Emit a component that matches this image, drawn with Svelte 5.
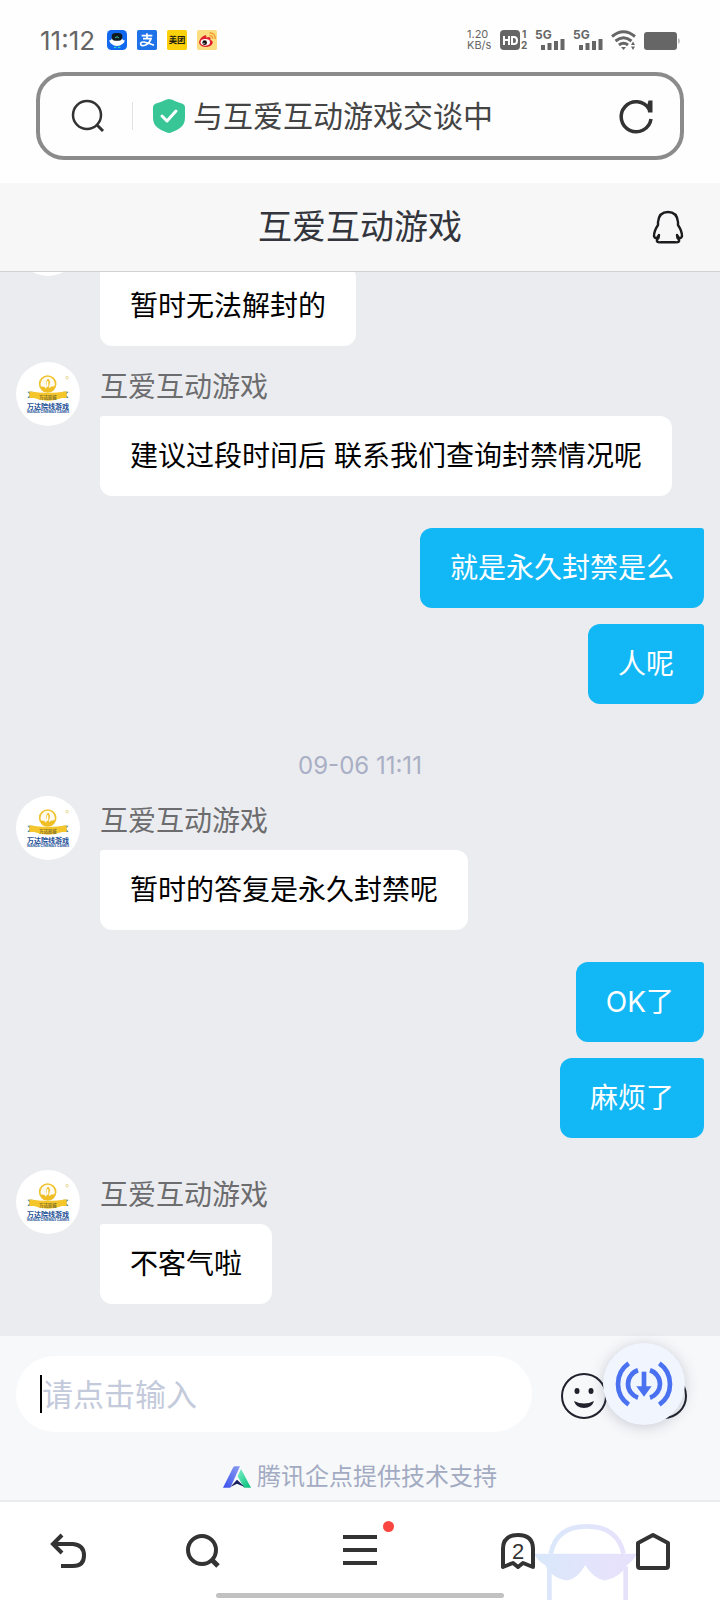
<script lang="ts">
	import { onMount } from "svelte";

	const contact = "互爱互动游戏";

	const messages = [
		{ from: "them", text: "暂时无法解封的" },
		{ from: "them", text: "建议过段时间后 联系我们查询封禁情况呢" },
		{ from: "me", text: "就是永久封禁是么", turn: true },
		{ from: "me", text: "人呢" },
		{ from: "time", text: "09-06 11:11" },
		{ from: "them", text: "暂时的答复是永久封禁呢" },
		{ from: "me", text: "OK了", turn: true },
		{ from: "me", text: "麻烦了" },
		{ from: "them", text: "不客气啦", turn: true },
	];

	let address = "与互爱互动游戏交谈中";
	let draft = "";
	let chat: HTMLElement;

	// open on the newest message
	onMount(() => {
		chat.scrollTop = chat.scrollHeight;
	});
</script>

<div class="page">
	<div class="status">
		<span class="clock">11:12</span>
		<div class="apps">
			<svg viewBox="0 0 60 60">
				<rect width="60" height="60" rx="13" fill="#1268ee" />
				<path d="M6 31q5 1 8 -3q3 -19 16 -19t16 19q3 4 8 3q-3 9 -8 11q-6 6 -16 6t-16 -6q-5 -2 -8 -11z" fill="#fff" />
				<rect x="14" y="9" width="32" height="23" rx="11" fill="#101820" />
				<path d="M24 24q6 -8 12 0" stroke="#35d0a0" stroke-width="3" fill="none" />
				<path d="M21 50h7v4h-7zM33 50h7v4h-7z" fill="#2fd9c4" />
			</svg>
			<svg viewBox="0 0 60 60">
				<rect width="60" height="60" rx="5" fill="#1f72e8" />
				<path d="M30 10v15M14 17h32M18 26h24q-4 13 -16 19q-12 5 -15 -2q-1 -8 10 -7q13 3 30 10" stroke="#fff" stroke-width="5" fill="none" />
			</svg>
			<svg viewBox="0 0 60 60">
				<rect width="60" height="60" rx="5" fill="#fbd10b" />
				<text x="30" y="39" font-size="25" font-weight="700" text-anchor="middle" fill="#1d1a10">美团</text>
			</svg>
			<svg viewBox="0 0 60 60">
				<rect width="60" height="60" rx="5" fill="#fbdd82" />
				<path d="M6 36q3 -13 18 -20q6 -1 4 7q13 -5 13 3l-1 4q9 3 7 9q-4 12 -22 12q-18 -1 -19 -15z" fill="#e0202c" />
				<ellipse cx="25" cy="37" rx="14" ry="10" fill="#fff" />
				<circle cx="23" cy="38" r="7" fill="#15100f" />
				<circle cx="21" cy="40" r="2" fill="#fff" />
				<path d="M38 17q9 -1 9 9M38 9q17 -1 17 18" stroke="#f0962a" stroke-width="4" fill="none" />
			</svg>
		</div>
		<div class="signals">
			<div class="speed"><span>1.20</span><span>KB/s</span></div>
			<svg class="hd" viewBox="0 0 28 20">
				<rect width="20" height="20" rx="4" fill="#666" />
				<path d="M4 6v9M9 6v9M4 10h5M12 7h2q3 0 3 3.500t-3 3.500h-2z" stroke="#fff" stroke-width="2" fill="none" />
				<text x="22" y="8" font-size="10" font-weight="700" fill="#666">1</text>
				<text x="21" y="19" font-size="10" font-weight="700" fill="#666">2</text>
			</svg>
			{#each [1, 2] as sim (sim)}
				<svg class="sim" viewBox="0 0 31 20">
					<text x="0" y="9" font-size="12" font-weight="700" fill="#666">5G</text>
					<path d="M8 15v5M14.500 13v7M21 11v9M27.500 9v11" stroke="#666" stroke-width="4" />
				</svg>
			{/each}
			<svg class="wifi" viewBox="0 0 26 20">
				<path d="M1 6.500q11.500 -9.500 23 0M4.500 11q8 -6.500 16 0M8 15q4.500 -3.500 9 0" stroke="#666" stroke-width="3" fill="none" />
				<path d="M10 17h5l-2.500 3zM20 15l2 -3.500l2 3.500zM20 16.500h4l-2 3.500z" fill="#666" />
			</svg>
			<svg class="battery" viewBox="0 0 36 20">
				<rect y="2" width="33" height="18" rx="3" fill="#666" />
				<path d="M34 8q2 1 2 3t-2 3z" fill="#bbb" />
			</svg>
		</div>
	</div>

	<div class="address">
		<svg class="find" viewBox="0 0 34 34" fill="none" stroke="#333" stroke-width="2.500">
			<circle cx="16" cy="16" r="14" />
			<path d="M26 26l6 6" stroke-width="3" />
		</svg>
		<span class="divider"></span>
		<svg class="shield" viewBox="0 0 32 34">
			<path d="M16 0q3 0 7 2.500q4 1.500 6 2q3 1 3 4v10q0 7 -5 10.500q-3 2 -6.500 3.500t-4.500 1.500t-4.500 -1.500t-6.500 -3.500q-5 -3.500 -5 -10.500v-10q0 -3 3 -4q2 -.5 6 -2q4 -2.500 7 -2.500z" fill="#38c696" />
			<path d="M9 17l5 5l9 -10" stroke="#fff" stroke-width="3" fill="none" stroke-linecap="round" stroke-linejoin="round" />
		</svg>
		<input aria-label="地址栏" bind:value={address} />
		<button class="reload" aria-label="刷新">
			<svg viewBox="0 0 34 34" fill="none" stroke="#333" stroke-width="3.500">
				<path d="M32 20a15 15 0 1 1 -2 -10" />
				<path d="M28 7l1.500 -5.500h4v12h-4.500z" fill="#333" stroke="none" />
			</svg>
		</button>
	</div>

	<header>
		<h1>{contact}</h1>
		<button class="penguin" aria-label="QQ">
			<svg viewBox="0 0 30 34" fill="none" stroke="#1c1c1e" stroke-width="2.400" stroke-linejoin="round">
				<path d="M15 2q-9 0 -10 10v3q-4 6 -4 11q1 3 3 2l2 -3l-.5 3q-2 2 -1.500 3.500q1 1 4 .8h14q3 .2 4 -.8q.5 -1.500 -1.500 -3.500l-.5 -3l2 3q2 1 3 -2q0 -5 -4 -11v-3q-1 -10 -10 -10z" />
			</svg>
		</button>
	</header>

	<main bind:this={chat}>
		{#each messages as message}
			{#if message.from === "time"}
				<time>{message.text}</time>
			{:else if message.from === "me"}
				<div class="row me" class:turn={message.turn}>
					<p class="bubble">{message.text}</p>
				</div>
			{:else}
				<div class="row them" class:turn={message.turn}>
					<svg class="avatar" viewBox="0 0 192 192">
						<circle cx="96" cy="96" r="96" fill="#fff" />
						<circle cx="95" cy="66" r="24" fill="#fffaf0" stroke="#f0c330" stroke-width="5" />
						<path d="M73 74q12 -3 17 6l3 -8q-5 -16 3 -22q9 5 4 20l-1 9q6 -8 18 -6q-5 17 -22 18q-17 -1 -22 -17z" fill="#efbe25" />
						<path d="M95 58v16" stroke="#fff" stroke-width="4" />
						<path d="M34 89l8 9l-8 10h16v-19zM158 89l-8 9l8 10h-16v-19z" fill="#4b86a5" />
						<path d="M40 88q55 10 112 0v20h-14q-42 16 -84 0h-14z" fill="#f5c62b" />
						<text x="96" y="111" font-size="13" font-weight="700" text-anchor="middle" fill="#81702a">万达影城</text>
						<text x="96" y="141" font-size="21" font-weight="700" text-anchor="middle" fill="#1c4f96">万达院线游戏</text>
						<text x="96" y="154" font-size="10" font-weight="700" text-anchor="middle" fill="#2d5c9e">WANDA CINEMAS GAMES</text>
						<circle cx="153" cy="47" r="4" fill="none" stroke="#e8dc9a" stroke-width="3" />
					</svg>
					<div class="body">
						<span class="name">{contact}</span>
						<p class="bubble">{message.text}</p>
					</div>
				</div>
			{/if}
		{/each}
	</main>

	<footer>
		<div class="composer">
			<label class="field">
				<span class="caret"></span>
				<input aria-label="消息" placeholder="请点击输入" bind:value={draft} />
			</label>
			<button aria-label="表情">
				<svg viewBox="0 0 48 48">
					<circle cx="24" cy="24" r="22" fill="none" stroke="#1f222c" stroke-width="2" />
					<ellipse cx="17" cy="19" rx="2.500" ry="3" fill="#1f222c" />
					<ellipse cx="31" cy="19" rx="2.500" ry="3" fill="#1f222c" />
					<path d="M14 29q10 5 20 0q-2 7 -10 7t-10 -7z" fill="#1f222c" />
				</svg>
			</button>
			<button aria-label="更多">
				<svg viewBox="0 0 48 48" fill="none" stroke="#1f222c" stroke-width="2">
					<circle cx="24" cy="24" r="22" />
					<path d="M24 14v20M14 24h20" />
				</svg>
			</button>
		</div>
		<div class="support">
			<svg viewBox="0 0 84 64">
				<defs>
					<linearGradient id="blue" x1="1" y1="0" x2="0" y2="1">
						<stop offset="0" stop-color="#8a9cf0" />
						<stop offset="1" stop-color="#3a50ee" />
					</linearGradient>
					<linearGradient id="green" x1="0" y1="0" x2="1" y2="1">
						<stop offset="0" stop-color="#7df0c8" />
						<stop offset="1" stop-color="#00bd78" />
					</linearGradient>
				</defs>
				<path d="M0 64L30 4q2 -4 7 -4h14L22 64z" fill="url(#blue)" />
				<path d="M54 8L84 64H63L44 30z" fill="url(#green)" />
				<path d="M22 62l20 -22l23 22l-23 -10z" fill="#17205c" />
			</svg>
			<span>腾讯企点提供技术支持</span>
		</div>
		<button class="float" aria-label="下载">
			<svg viewBox="0 0 168 136" fill="none" stroke="#4a72f0" stroke-width="14">
				<path d="M38 6A76 76 0 0 0 38 130M130 6A76 76 0 0 1 130 130" />
				<path d="M66 27A43 43 0 0 0 66 109M102 27A43 43 0 0 1 102 109" />
				<path d="M84 31v50" />
				<path d="M61 75h46L84 106z" fill="#4a72f0" stroke="none" />
			</svg>
		</button>
	</footer>

	<nav>
		<svg class="mascot" viewBox="0 0 308 230">
			<defs>
				<linearGradient id="haze" gradientUnits="userSpaceOnUse" x1="40" y1="0" x2="270" y2="60">
					<stop offset="0" stop-color="#d9e8fb" />
					<stop offset="1" stop-color="#e7e2fb" />
				</linearGradient>
			</defs>
			<path d="M50 92Q66 10 158 10T268 92M46 130v100M274 130v100" fill="none" stroke="url(#haze)" stroke-width="14" />
			<path d="M0 92h308q-10 20 -30 34q-20 36 -66 46q-34 -6 -59 -46q-22 40 -54 46q-50 -10 -65 -46q-24 -14 -34 -34z" fill="url(#haze)" />
		</svg>
		<button aria-label="返回">
			<svg viewBox="0 0 36 38" fill="none" stroke="#333" stroke-width="4">
				<path d="M12 3L3 12L12 21M3 12H23q11 1 11 11.500T23 34H11" />
			</svg>
		</button>
		<button aria-label="搜索">
			<svg viewBox="0 0 36 38" fill="none" stroke="#333" stroke-width="4">
				<circle cx="17" cy="18" r="14" />
				<path d="M26 27l7 7" stroke-width="5" />
			</svg>
		</button>
		<button aria-label="菜单">
			<svg viewBox="0 0 36 38" fill="none" stroke="#333" stroke-width="4">
				<path d="M1 5h34M1 18h34M1 31h34" />
			</svg>
			<span class="dot"></span>
		</button>
		<button aria-label="标签页">
			<svg viewBox="0 0 36 38" fill="none" stroke="#333" stroke-width="4" stroke-linejoin="round">
				<path d="M3 35V17Q3 3 18 3T33 17v18l-5 -2l-5 -2l-5 4l-5 -4l-5 2z" />
				<text x="18" y="27" font-size="22" font-weight="500" text-anchor="middle" fill="#333" stroke="none">2</text>
			</svg>
		</button>
		<button aria-label="主页">
			<svg viewBox="0 0 36 38" fill="none" stroke="#333" stroke-width="4" stroke-linejoin="round">
				<path d="M3 11L18 3L33 11v23q0 2 -2 2H5q-2 0 -2 -2z" />
			</svg>
		</button>
		<span class="indicator"></span>
	</nav>
</div>

<style>
	:global(body) {
		font-family: Inter, "Noto Sans CJK SC", sans-serif;
	}

	.page {
		display: flex;
		flex-direction: column;
		height: 100vh;
		background: #fefefe;
	}

	svg {
		display: block;
		flex: none;
		overflow: visible;
	}

	button {
		display: flex;
		align-items: center;
		justify-content: center;
		padding: 0;
		border: 0;
		background: none;
	}

	input {
		flex: 1;
		min-width: 0;
		padding: 0;
		border: 0;
		outline: 0;
		background: none;
		font-family: inherit;
	}

	/* phone status bar */
	.status {
		display: flex;
		align-items: center;
		flex: none;
		box-sizing: border-box;
		height: 72px;
		padding: 8px 40px 0;
		color: #666;
	}
	.clock {
		font-size: 26px;
	}
	.apps {
		display: flex;
		gap: 10px;
		margin-left: 12px;
	}
	.apps svg {
		width: 20px;
		height: 20px;
	}
	.signals {
		display: flex;
		align-items: center;
		gap: 7px;
		margin-left: auto;
	}
	.signals svg {
		height: 20px;
	}
	.speed {
		display: flex;
		flex-direction: column;
		width: 26px;
		font-size: 11px;
		line-height: 11px;
	}
	.hd {
		width: 28px;
	}
	.sim {
		width: 31px;
	}
	.wifi {
		width: 26px;
	}
	.battery {
		width: 36px;
	}

	/* address bar */
	.address {
		display: flex;
		align-items: center;
		flex: none;
		box-sizing: border-box;
		height: 88px;
		margin: 0 36px 23px;
		padding: 0 27px 0 31px;
		border: 4px solid #8b8b8b;
		border-radius: 28px;
	}
	.find,
	.reload svg {
		width: 34px;
		height: 34px;
	}
	.divider {
		width: 1px;
		height: 28px;
		margin: 0 20px 0 27px;
		background: #e2e2e2;
	}
	.shield {
		width: 32px;
		height: 34px;
		margin-right: 8px;
	}
	.address input {
		height: 40px;
		margin-bottom: 4px;
		color: #444;
		font-size: 30px;
	}

	header {
		display: grid;
		grid-template-columns: 1fr auto 1fr;
		align-items: center;
		flex: none;
		height: 88px;
		padding: 0 37px;
		border-bottom: 1px solid #cfd1d4;
		background: #f7f7f8;
	}
	h1 {
		grid-column: 2;
		margin: 0;
		color: #33353c;
		font-size: 34px;
		font-weight: 400;
		line-height: 40px;
	}
	.penguin {
		justify-self: end;
	}
	.penguin svg {
		width: 30px;
		height: 34px;
	}

	/* conversation */
	main {
		display: flex;
		flex-direction: column;
		flex: 1;
		gap: 16px;
		min-height: 0;
		overflow-y: auto;
		scrollbar-width: none;
		padding: 0 16px;
		background: #ebecf0;
	}
	main::after {
		content: "";
		flex: none;
		height: 16px;
	}
	.row {
		display: flex;
		flex: none;
	}
	.turn {
		margin-top: 16px;
	}
	.me {
		justify-content: flex-end;
	}
	.avatar {
		width: 64px;
		height: 64px;
		margin-right: 20px;
	}
	.body {
		display: flex;
		flex-direction: column;
		align-items: flex-start;
	}
	.name {
		margin-bottom: 4px;
		color: #6c6c6e;
		font-size: 28px;
		line-height: 50px;
	}
	.bubble {
		margin: 0;
		padding: 20px 30px;
		border-radius: 3px 12px 12px 12px;
		background: #fff;
		color: #000;
		font-size: 28px;
		line-height: 40px;
	}
	.me .bubble {
		border-radius: 12px 3px 12px 12px;
		background: #12b7f5;
		color: #fff;
	}
	time {
		flex: none;
		padding-top: 32px;
		color: #a9afc4;
		font-size: 24px;
		line-height: 28px;
		text-align: center;
	}

	footer {
		position: relative;
		flex: none;
		padding: 20px 32px 0 16px;
		background: #f7f8fa;
	}
	.composer {
		display: flex;
		align-items: center;
		gap: 32px;
	}
	.field {
		display: flex;
		align-items: center;
		flex: 1;
		box-sizing: border-box;
		min-width: 0;
		height: 76px;
		margin-right: -4px;
		padding: 0 24px;
		border-radius: 38px;
		background: #fff;
	}
	.caret {
		width: 2px;
		height: 38px;
		background: #000;
	}
	.field input {
		color: #000;
		font-size: 31px;
	}
	.field input::placeholder {
		color: #c3cadb;
		opacity: 1;
	}
	.composer button {
		margin-top: 4px;
	}
	.composer button svg {
		width: 48px;
		height: 48px;
	}
	.support {
		display: flex;
		align-items: center;
		justify-content: center;
		gap: 6px;
		height: 68px;
		padding: 22px 0 0 16px;
		box-sizing: border-box;
		color: #a3abc2;
		font-size: 24px;
		line-height: 28px;
	}
	.support svg {
		width: 28px;
		height: 22px;
	}
	.float {
		position: absolute;
		top: 7px;
		right: 35px;
		width: 82px;
		height: 82px;
		border-radius: 50%;
		background: #f0f5fe;
		box-shadow: 0 2px 14px rgba(60, 70, 100, 0.25);
	}
	.float svg {
		width: 56px;
		height: 46px;
	}

	/* browser toolbar */
	nav {
		position: relative;
		display: grid;
		grid-template-columns: 3fr 3fr 4fr 3fr 3fr;
		flex: none;
		height: 98px;
		border-top: 2px solid #ebecef;
		background: #fff;
	}
	nav button {
		position: relative;
	}
	nav button svg {
		width: 36px;
		height: 38px;
	}
	.mascot {
		position: absolute;
		right: 83px;
		bottom: 0;
		width: 103px;
		height: 77px;
	}
	.dot {
		position: absolute;
		top: 19px;
		left: calc(50% + 23px);
		width: 11px;
		height: 11px;
		border-radius: 50%;
		background: #fa4640;
	}
	.indicator {
		position: absolute;
		bottom: 2px;
		left: 30%;
		width: 40%;
		height: 5px;
		border-radius: 3px;
		background: #c1c1c1;
	}
</style>
